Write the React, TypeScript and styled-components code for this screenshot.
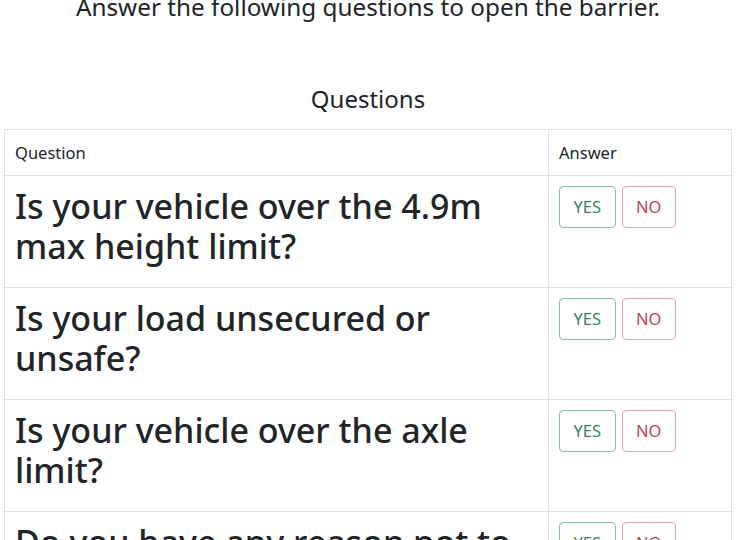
import React from "react";
import styled, { createGlobalStyle } from "styled-components";

const questions = [
  "Is your vehicle over the 4.9m max height limit?",
  "Is your load unsecured or unsafe?",
  "Is your vehicle over the axle limit?",
  "Do you have any reason not to proceed?",
];

const GlobalStyle = createGlobalStyle`
  body {
    margin: 0;
    background: #fff;
    color: #212529;
    font-family: "Noto Sans", "Open Sans", sans-serif;
    overflow: hidden;
  }
`;

const Page = styled.div`
  padding: 0 8px 0 4px;
  margin-top: -8px;
`;

const Title = styled.h4`
  margin: 0;
  font-size: 24.3px;
  font-weight: 400;
  line-height: 29px;
  text-align: center;
`;

const SubTitle = styled.h4`
  margin: 63px 0 16px;
  font-size: 24px;
  font-weight: 400;
  line-height: 29px;
  text-align: center;
`;

const Table = styled.table`
  width: 100%;
  table-layout: fixed;
  border-collapse: collapse;
  border: 1px solid #dee2e6;
`;

const HeadCell = styled.th<{ w?: number }>`
  width: ${(p) => (p.w ? `${p.w}px` : "auto")};
  text-align: left;
  font-weight: 400;
  font-size: 16.5px;
  line-height: 24px;
  padding: 11px 10px 10px;
  border: 1px solid #dee2e6;
`;

const Cell = styled.td`
  vertical-align: top;
  padding: 10px 10px 21px;
  border: 1px solid #dee2e6;
`;

const QuestionText = styled.h1`
  margin: 0;
  font-size: 34px;
  font-weight: 500;
  line-height: 40px;
`;

const Buttons = styled.div`
  display: flex;
  gap: 6px;
`;

const AnswerButton = styled.button<{ kind: "yes" | "no" }>`
  font-family: inherit;
  font-size: 16.5px;
  line-height: 24px;
  padding: 8px 13.5px;
  background: #fff;
  border-radius: 4px;
  border: 1px solid ${(p) => (p.kind === "yes" ? "#8bbaa5" : "#e0a5ad")};
  color: ${(p) => (p.kind === "yes" ? "#3a8464" : "#c2404f")};
  cursor: pointer;
`;

export default function App() {
  return (
    <>
      <GlobalStyle />
      <Page>
        <Title>Answer the following questions to open the barrier.</Title>
        <SubTitle>Questions</SubTitle>
        <Table>
          <thead>
            <tr>
              <HeadCell>Question</HeadCell>
              <HeadCell w={162}>Answer</HeadCell>
            </tr>
          </thead>
          <tbody>
            {questions.map((q) => (
              <tr key={q}>
                <Cell>
                  <QuestionText>{q}</QuestionText>
                </Cell>
                <Cell>
                  <Buttons>
                    <AnswerButton kind="yes">YES</AnswerButton>
                    <AnswerButton kind="no">NO</AnswerButton>
                  </Buttons>
                </Cell>
              </tr>
            ))}
          </tbody>
        </Table>
      </Page>
    </>
  );
}
